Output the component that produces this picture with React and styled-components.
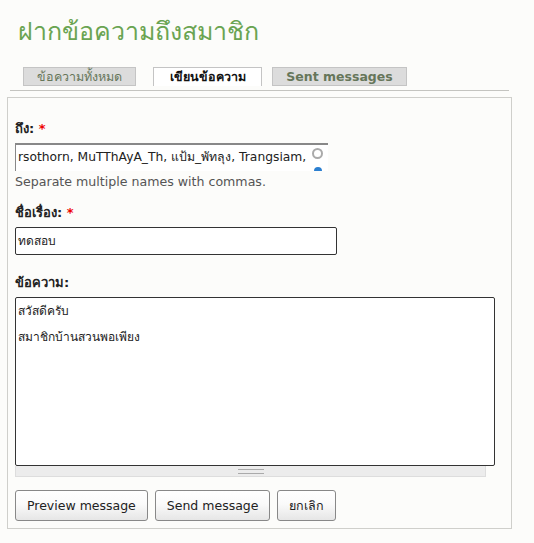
import React from 'react';
import styled, { createGlobalStyle } from 'styled-components';

const GlobalStyle = createGlobalStyle`
  html, body {
    margin: 0;
    padding: 0;
    background: #fcfcfa;
  }
  body {
    font-family: "DejaVu Sans", "Noto Sans", sans-serif;
    font-size: 12px;
    color: #222;
  }
`;

const Page = styled.div`
  width: 534px;
`;

const Title = styled.h1`
  margin: 0;
  padding: 16px 0 0 18px;
  height: 50px;
  box-sizing: border-box;
  font-size: 25px;
  font-weight: normal;
  color: #6aa452;
  line-height: 32px;
`;

const TabBar = styled.ul`
  display: flex;
  list-style: none;
  margin: 17px 0 0 10px;
  padding: 0 0 0 13px;
  width: 486px;
  height: 23px;
  border-bottom: 1px solid #c4c4c0;
`;

const Tab = styled.li`
  box-sizing: border-box;
  height: 19px;
  margin-right: ${p => p.$gap}px;
  width: ${p => p.$w}px;
  background: ${p => (p.$active ? '#fff' : '#dcdcdc')};
  border: 1px solid #c4c4c4;
  border-bottom: ${p => (p.$active ? 'none' : '1px solid #c4c4c4')};
  text-align: center;
  font-size: 12.5px;
  line-height: 17px;
  color: ${p => (p.$active ? '#111' : '#66765a')};
  font-weight: ${p => (p.$thin ? 'normal' : 'bold')};
`;

const Box = styled.form`
  margin: 6px 0 0 7px;
  width: 505px;
  box-sizing: border-box;
  border: 1px solid #cfcfcb;
  padding: 22px 7px 7px 7px;
`;

const Field = styled.div`
  margin-bottom: ${p => p.$mb}px;
`;

const Label = styled.label`
  display: block;
  font-weight: bold;
  font-size: 13px;
  line-height: 18px;
  margin-bottom: 5px;
  color: #222;
`;

const Req = styled.span`
  color: #e00;
`;

const AutoInput = styled.div`
  position: relative;
  width: 313px;
  height: 28px;
  box-sizing: border-box;
  background: #fff;
  border-top: 2px solid #888;
  border-left: 1px solid #888;
  font-size: 12.3px;
  line-height: 24px;
  padding: 0 20px 0 2px;
  white-space: nowrap;
  overflow: hidden;
`;

const Throbber = styled.span`
  position: absolute;
  right: 5px;
  top: 3px;
  width: 7px;
  height: 7px;
  border: 2px solid #aaa;
  border-radius: 50%;
`;

const ThrobberBlue = styled.span`
  position: absolute;
  right: 6px;
  top: 22px;
  width: 8px;
  height: 8px;
  border-radius: 50%;
  background: #2b7fd0;
`;

const Hint = styled.div`
  font-size: 12.6px;
  line-height: 16px;
  color: #555;
  margin-top: 3px;
`;

const TextInput = styled.div`
  width: 322px;
  height: 28px;
  box-sizing: border-box;
  background: #fff;
  border: 1px solid #333;
  border-radius: 2px;
  font-size: 12px;
  line-height: 26px;
  padding-left: 2px;
`;

const TextArea = styled.div`
  width: 480px;
  height: 169px;
  box-sizing: border-box;
  background: #fff;
  border: 1px solid #333;
  border-radius: 2px;
  font-size: 12px;
  line-height: 26px;
  padding: 0 2px;
`;

const Grippie = styled.div`
  width: 469px;
  height: 10px;
  background: #ececec;
  border: 1px solid #ddd;
  border-top: none;
  display: flex;
  align-items: center;
  justify-content: center;
`;

const GripLines = styled.span`
  width: 26px;
  height: 3px;
  border-top: 1px solid #aaa;
  border-bottom: 1px solid #aaa;
`;

const Buttons = styled.div`
  display: flex;
  gap: 7px;
  margin-top: 13px;
`;

const Button = styled.button`
  height: 31px;
  padding: 0 11px;
  font-family: "DejaVu Sans", sans-serif;
  font-size: 12.5px;
  color: #222;
  border: 1px solid #888;
  border-radius: 3px;
  background: linear-gradient(#fff 0%, #fafafa 45%, #e6e6e6 100%);
`;

export default function App() {
  return (
    <Page>
      <GlobalStyle />
      <Title>ฝากข้อความถึงสมาชิก</Title>
      <TabBar>
        <Tab $w={113} $gap={17} $thin>ข้อความทั้งหมด</Tab>
        <Tab $w={109} $gap={10} $active>เขียนข้อความ</Tab>
        <Tab $w={135} $gap={0}>Sent messages</Tab>
      </TabBar>
      <Box>
        <Field $mb={14}>
          <Label>ถึง: <Req>*</Req></Label>
          <AutoInput>
            rsothorn, MuTThAyA_Th, แป้ม_พัทลุง, Trangsiam,
            <Throbber />
            <ThrobberBlue />
          </AutoInput>
          <Hint>Separate multiple names with commas.</Hint>
        </Field>
        <Field $mb={19}>
          <Label>ชื่อเรื่อง: <Req>*</Req></Label>
          <TextInput>ทดสอบ</TextInput>
        </Field>
        <Field $mb={0}>
          <Label>ข้อความ:</Label>
          <TextArea>
            <div>สวัสดีครับ</div>
            <div>สมาชิกบ้านสวนพอเพียง</div>
          </TextArea>
          <Grippie><GripLines /></Grippie>
        </Field>
        <Buttons>
          <Button type="button">Preview message</Button>
          <Button type="button">Send message</Button>
          <Button type="button">ยกเลิก</Button>
        </Buttons>
      </Box>
    </Page>
  );
}
